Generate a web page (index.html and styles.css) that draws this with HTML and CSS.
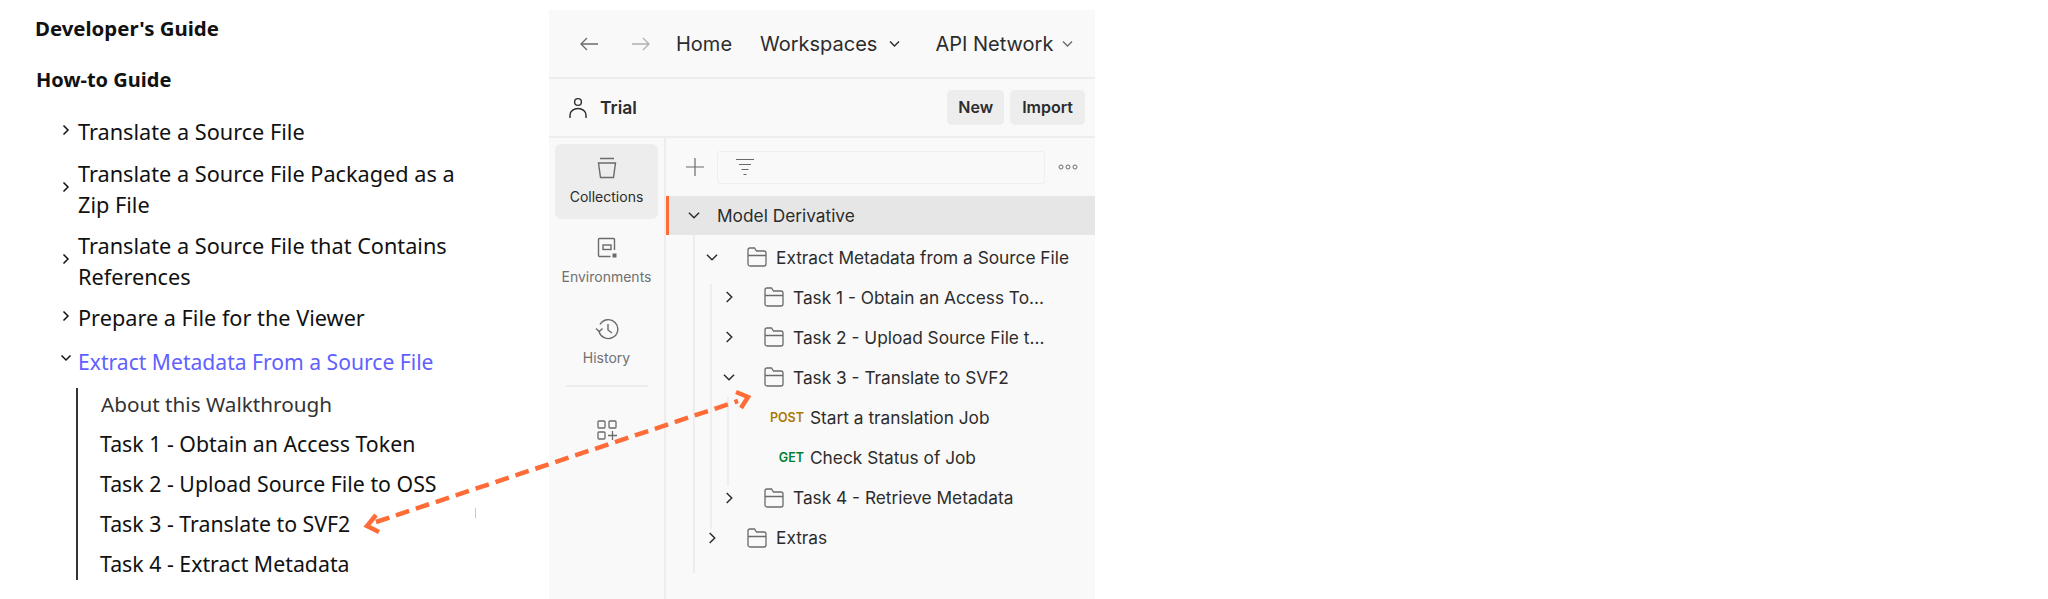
FILE: index.html
```html
<!DOCTYPE html>
<html>
  <head>
    <title>Extract Metadata - Developer's Guide</title>
    <link rel="stylesheet" href="styles.css">
  </head>
  <body>
    <div class="page">
      <div class="docs">
        <div class="docs-title">Developer's Guide</div>
        <div class="docs-sub">How-to Guide</div>
        <div class="docs-item">
          <svg class="docs-arrow" viewBox="0 0 8 12"><path d="M1.500 1.500 6 6l-4.500 4.500"/></svg>
          <span>Translate a Source File</span>
        </div>
        <div class="docs-item">
          <svg class="docs-arrow" viewBox="0 0 8 12"><path d="M1.500 1.500 6 6l-4.500 4.500"/></svg>
          <span>Translate a Source File Packaged as a Zip File</span>
        </div>
        <div class="docs-item">
          <svg class="docs-arrow" viewBox="0 0 8 12"><path d="M1.500 1.500 6 6l-4.500 4.500"/></svg>
          <span>Translate a Source File that Contains References</span>
        </div>
        <div class="docs-item">
          <svg class="docs-arrow" viewBox="0 0 8 12"><path d="M1.500 1.500 6 6l-4.500 4.500"/></svg>
          <span>Prepare a File for the Viewer</span>
        </div>
        <div class="docs-item docs-open">
          <svg class="docs-arrow" viewBox="0 0 12 8"><path d="M1.500 1.500 6 6l4.500-4.500"/></svg>
          <span>Extract Metadata From a Source File</span>
        </div>
        <div class="docs-tasks">
          <div class="docs-task docs-about">About this Walkthrough</div>
          <div class="docs-task">Task 1 - Obtain an Access Token</div>
          <div class="docs-task">Task 2 - Upload Source File to OSS</div>
          <div class="docs-task">Task 3 - Translate to SVF2</div>
          <div class="docs-task">Task 4 - Extract Metadata</div>
        </div>
      </div>

      <div class="app">
        <div class="topnav">
          <svg class="nav-arrow" viewBox="0 0 20 16"><path d="M19 8H2M8 2 2 8l6 6"/></svg>
          <svg class="nav-arrow nav-off" viewBox="0 0 20 16"><path d="M1 8h17M12 2l6 6-6 6"/></svg>
          <span class="nav-link nav-home">Home</span>
          <span class="nav-link nav-work">Workspaces</span>
          <svg class="nav-caret" viewBox="0 0 12 8"><path d="M1.500 1.500 6 6l4.500-4.500"/></svg>
          <span class="nav-link nav-api">API Network</span>
          <svg class="nav-caret nav-caret-soft" viewBox="0 0 12 8"><path d="M1.500 1.500 6 6l4.500-4.500"/></svg>
        </div>

        <div class="workspace">
          <svg class="user-icon" viewBox="0 0 18 22"><circle cx="9" cy="5" r="3.400"/><path d="M1 21v-3a8 6.500 0 0 1 16 0v3"/></svg>
          <span class="workspace-name">Trial</span>
          <span class="btn btn-new">New</span>
          <span class="btn">Import</span>
        </div>

        <div class="main">
          <div class="side">
            <div class="side-item side-active">
              <svg viewBox="0 0 20 22"><path d="M3 1.500h14M1.500 6h17l-2 14.500h-13z"/></svg>
              <span>Collections</span>
            </div>
            <div class="side-item side-env">
              <svg viewBox="0 0 20 22"><path d="M17.500 13V2.500a1 1 0 0 0-1-1h-14a1 1 0 0 0-1 1v16a1 1 0 0 0 1 1h11"/><rect x="6" y="8" width="8" height="4.500"/><rect class="fill" x="15.500" y="16.500" width="4" height="4"/></svg>
              <span>Environments</span>
            </div>
            <div class="side-item side-hist">
              <svg viewBox="0 0 24 22"><path d="M5 6.500A9.500 9.500 0 1 1 4 13"/><path d="M1 10.500 4.200 13.500 7.500 10.500M13 6v6l4 3"/></svg>
              <span>History</span>
            </div>
            <div class="side-rule"></div>
            <svg class="side-grid" viewBox="0 0 20 20"><rect x="1" y="1" width="7" height="7" rx="1"/><rect x="12" y="1" width="7" height="7" rx="1"/><rect x="1" y="12" width="7" height="7" rx="1"/><path d="M11 15.500h9M15.500 11v9"/></svg>
          </div>

          <div class="panel">
            <div class="panel-tools">
              <svg class="plus" viewBox="0 0 18 18"><path d="M9 0v18M0 9h18"/></svg>
              <div class="search">
                <svg class="filter" viewBox="0 0 20 18"><path d="M1 1.500h18M4 6.500h12M6.500 11.500h7M8.500 16.500h3"/></svg>
              </div>
              <svg class="dots" viewBox="0 0 20 6"><circle cx="3" cy="3" r="2"/><circle cx="10" cy="3" r="2"/><circle cx="17" cy="3" r="2"/></svg>
            </div>

            <div class="row row-selected">
              <svg class="chev chev-down" viewBox="0 0 12 8"><path d="M1.500 1.500 6 6l4.500-4.500"/></svg>
              <span class="row-label">Model Derivative</span>
            </div>

            <div class="branch branch-1">
              <div class="row">
                <svg class="chev chev-down" viewBox="0 0 12 8"><path d="M1.500 1.500 6 6l4.500-4.500"/></svg>
                <svg class="folder" viewBox="0 0 20 20"><path d="M1 3a2 2 0 0 1 2-2h4.500l2 3H17a2 2 0 0 1 2 2v11a2 2 0 0 1-2 2H3a2 2 0 0 1-2-2zM1 8.500h18"/></svg>
                <span class="row-label">Extract Metadata from a Source File</span>
              </div>
              <div class="branch branch-2">
                <div class="row">
                  <svg class="chev" viewBox="0 0 8 12"><path d="M1.500 1.500 6 6l-4.500 4.500"/></svg>
                  <svg class="folder" viewBox="0 0 20 20"><path d="M1 3a2 2 0 0 1 2-2h4.500l2 3H17a2 2 0 0 1 2 2v11a2 2 0 0 1-2 2H3a2 2 0 0 1-2-2zM1 8.500h18"/></svg>
                  <span class="row-label">Task 1 - Obtain an Access To...</span>
                </div>
                <div class="row">
                  <svg class="chev" viewBox="0 0 8 12"><path d="M1.500 1.500 6 6l-4.500 4.500"/></svg>
                  <svg class="folder" viewBox="0 0 20 20"><path d="M1 3a2 2 0 0 1 2-2h4.500l2 3H17a2 2 0 0 1 2 2v11a2 2 0 0 1-2 2H3a2 2 0 0 1-2-2zM1 8.500h18"/></svg>
                  <span class="row-label">Task 2 - Upload Source File t...</span>
                </div>
                <div class="row">
                  <svg class="chev chev-down" viewBox="0 0 12 8"><path d="M1.500 1.500 6 6l4.500-4.500"/></svg>
                  <svg class="folder" viewBox="0 0 20 20"><path d="M1 3a2 2 0 0 1 2-2h4.500l2 3H17a2 2 0 0 1 2 2v11a2 2 0 0 1-2 2H3a2 2 0 0 1-2-2zM1 8.500h18"/></svg>
                  <span class="row-label">Task 3 - Translate to SVF2</span>
                </div>
                <div class="branch branch-3">
                  <div class="row">
                    <span class="method method-post">POST</span>
                    <span class="row-label">Start a translation Job</span>
                  </div>
                  <div class="row">
                    <span class="method method-get">GET</span>
                    <span class="row-label">Check Status of Job</span>
                  </div>
                </div>
                <div class="row">
                  <svg class="chev" viewBox="0 0 8 12"><path d="M1.500 1.500 6 6l-4.500 4.500"/></svg>
                  <svg class="folder" viewBox="0 0 20 20"><path d="M1 3a2 2 0 0 1 2-2h4.500l2 3H17a2 2 0 0 1 2 2v11a2 2 0 0 1-2 2H3a2 2 0 0 1-2-2zM1 8.500h18"/></svg>
                  <span class="row-label">Task 4 - Retrieve Metadata</span>
                </div>
              </div>
              <div class="row">
                <svg class="chev" viewBox="0 0 8 12"><path d="M1.500 1.500 6 6l-4.500 4.500"/></svg>
                <svg class="folder" viewBox="0 0 20 20"><path d="M1 3a2 2 0 0 1 2-2h4.500l2 3H17a2 2 0 0 1 2 2v11a2 2 0 0 1-2 2H3a2 2 0 0 1-2-2zM1 8.500h18"/></svg>
                <span class="row-label">Extras</span>
              </div>
            </div>
          </div>
        </div>
      </div>
    </div>

    <!-- annotation drawn over both screenshots -->
    <svg class="callout" viewBox="0 0 2048 599">
      <path class="callout-line" d="M376 522 738 401"/>
      <path class="callout-head" d="M376 515 367 526 379 532M736 392 748 397 741 408"/>
      <path class="callout-tick" d="M475.500 508v10"/>
    </svg>
  </body>
</html>
```

FILE: styles.css
```css
html,
body {
  margin: 0;
  height: 100%;
  overflow: hidden;
  background-color: #fff;
}

svg {
  fill: none;
  stroke: currentColor;
  flex: none;
}

.page {
  display: flex;
  height: 599px;
}

/* left column, docs tree */
.docs {
  width: 549px;
  flex: none;
  box-sizing: border-box;
  padding: 13px 0 0 35px;
  font-family: "Noto Sans", sans-serif;
  color: #111;
}

.docs-title {
  font-size: 20.400px;
  font-weight: 700;
  line-height: 30px;
}

.docs-sub {
  font-size: 20px;
  font-weight: 700;
  line-height: 30px;
  margin: 22px 0 0 1px;
}

.docs-item {
  display: flex;
  align-items: center;
  width: 400px;
  margin: 10px 0 0 27px;
  font-size: 21.700px;
  line-height: 31px;
}

.docs-sub + .docs-item {
  margin-top: 21px;
  margin-bottom: 11px;
}

.docs-item span {
  flex: 1;
  margin-left: 8px;
}

.docs-arrow {
  width: 8px;
  height: 12px;
  stroke-width: 1.500;
  margin-top: -4px;
}

.docs-open {
  margin-left: 25px;
  margin-top: 13px;
}

.docs-open .docs-arrow {
  width: 12px;
  height: 8px;
  margin-top: -8px;
}

.docs-open span {
  margin-left: 6px;
  font-size: 21.100px;
  color: #5f60ff;
}

.docs-tasks {
  margin: 10.500px 0 0 41px;
  border-left: 2px solid #333;
  padding-left: 22px;
}

.docs-task {
  font-size: 21.300px;
  line-height: 32px;
  margin-bottom: 8.200px;
  white-space: nowrap;
}

.docs-task:last-child {
  margin-bottom: 0;
}

.docs-about {
  color: #333;
  padding-left: 1px;
  font-size: 20.700px;
}

/* right column, api client */
.app {
  width: 546px;
  flex: none;
  margin-top: 10px;
  background-color: #f9f9f9;
  font-family: Inter, sans-serif;
  color: #2c2c2c;
  display: flex;
  flex-direction: column;
}

.topnav {
  display: flex;
  align-items: center;
  height: 67px;
  flex: none;
  border-bottom: 2px solid #ededed;
  padding-left: 30px;
  font-size: 20px;
}

.nav-arrow {
  width: 20px;
  height: 16px;
  stroke: #6b6b6b;
  stroke-width: 1.300;
  margin-right: 32px;
}

.nav-off {
  stroke: #b0b0b0;
  margin-right: 25px;
}

.nav-work {
  margin-left: 28px;
}

.nav-api {
  margin-left: 34px;
}

.nav-caret {
  width: 13px;
  height: 8px;
  stroke-width: 1.400;
  margin-left: 11px;
}

.nav-caret-soft {
  stroke: #6b6b6b;
  margin-left: 8px;
}

.workspace {
  display: flex;
  align-items: center;
  height: 57px;
  flex: none;
  border-bottom: 2px solid #ededed;
  padding: 0 10px 0 20px;
}

.user-icon {
  width: 18px;
  height: 22px;
  stroke-width: 1.400;
}

.workspace-name {
  margin-left: 13px;
  flex: 1;
  font-size: 17.500px;
  font-weight: 600;
}

.btn {
  background-color: #ededed;
  border-radius: 5px;
  height: 35px;
  line-height: 35px;
  padding: 0 12px;
  font-size: 16px;
  font-weight: 600;
}

.btn-new {
  margin-right: 6px;
  padding: 0 11px;
}

.main {
  display: flex;
  flex: 1;
  min-height: 0;
}

.side {
  width: 117px;
  flex: none;
  box-sizing: border-box;
  border-right: 2px solid #ededed;
  padding: 6px 6px 0;
  display: flex;
  flex-direction: column;
  align-items: center;
}

.side-item {
  align-self: stretch;
  height: 75px;
  box-sizing: border-box;
  border-radius: 6px;
  display: flex;
  flex-direction: column;
  align-items: center;
  padding-top: 12px;
  font-size: 14px;
  color: #707070;
}

.side-item svg {
  width: 20px;
  height: 22px;
  stroke-width: 1.400;
  color: #6b6b6b;
  margin-bottom: 9px;
}

.side-active {
  background-color: #ededed;
  color: #2c2c2c;
  padding-top: 13px;
}

.side-env {
  margin-top: 6px;
}

.side-hist {
  margin-top: 6px;
}

.side-hist svg {
  width: 24px;
}

.fill {
  fill: #6b6b6b;
  stroke: none;
}

.side-rule {
  width: 82px;
  border-top: 2px solid #ededed;
  margin-top: 4px;
}

.side-grid {
  width: 20px;
  height: 20px;
  stroke: #6b6b6b;
  stroke-width: 1.300;
  margin-top: 33px;
}

.panel {
  flex: 1;
  min-width: 0;
}

.panel-tools {
  display: flex;
  align-items: center;
  height: 58px;
  padding-left: 20px;
}

.plus {
  width: 18px;
  height: 18px;
  stroke: #6b6b6b;
  stroke-width: 1.200;
}

.search {
  width: 328px;
  height: 33px;
  box-sizing: border-box;
  border: 1px solid #efefef;
  border-radius: 3px;
  margin-left: 13px;
  padding-left: 17px;
  display: flex;
  align-items: center;
}

.filter {
  width: 20px;
  height: 18px;
  stroke: #6b6b6b;
  stroke-width: 1.200;
}

.dots {
  width: 20px;
  height: 6px;
  stroke: #6b6b6b;
  stroke-width: 1;
  margin-left: 13px;
}

.row {
  display: flex;
  align-items: center;
  height: 40.100px;
  padding-left: 11px;
  font-size: 17.300px;
}

.row-label {
  white-space: nowrap;
}

.row-selected {
  height: 39px;
  background-color: #e6e6e6;
  border-left: 3px solid #ff6c37;
  padding-left: 19px;
}

.row-selected .row-label {
  margin-left: 17px;
}

.chev {
  width: 9px;
  height: 14px;
  stroke-width: 1.300;
  margin-left: 2px;
  margin-right: 1px;
}

.chev-down {
  width: 14px;
  height: 9px;
  margin-left: -1px;
  margin-right: -1px;
}

.folder {
  width: 20px;
  height: 20px;
  stroke: #6b6b6b;
  stroke-width: 1.300;
  margin-left: 29px;
  margin-right: 9px;
}

/* tree guides run a little past their rows, as in the app */
.branch {
  position: relative;
}

.branch::before {
  content: "";
  position: absolute;
  left: -2px;
  width: 2px;
  background-color: #ededed;
}

.branch-1 {
  margin-left: 29px;
  padding-top: 2px;
}

.branch-1::before {
  top: 0;
  bottom: -15px;
}

.branch-2 {
  margin-left: 17px;
}

.branch-2::before {
  top: 7px;
  bottom: -11px;
}

.branch-3 {
  margin-left: 17px;
}

.branch-3::before {
  top: 0;
  bottom: -8px;
}

.branch-3 .row {
  padding-left: 0;
}

.method {
  width: 75px;
  text-align: right;
  font-size: 12.500px;
  font-weight: 600;
  margin-right: 6px;
}

.method-post {
  color: #ad7a03;
}

.method-get {
  color: #007f31;
}

/* arrow that links the two columns */
.callout {
  position: absolute;
  left: 0;
  top: 0;
  width: 2048px;
  height: 599px;
  pointer-events: none;
}

.callout-line {
  stroke: #ff6c37;
  stroke-width: 4.500;
  stroke-dasharray: 14 7;
}

.callout-head {
  stroke: #ff6c37;
  stroke-width: 4.500;
}

.callout-tick {
  stroke: #f3b6a8;
  stroke-width: 1;
}
```
